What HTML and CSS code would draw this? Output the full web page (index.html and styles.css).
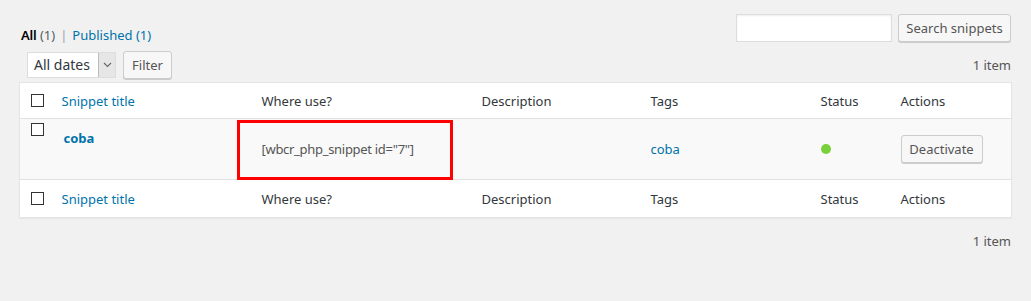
FILE: index.html
```html
<!DOCTYPE html>
<html>
<head>
<meta charset="utf-8">
<link rel="stylesheet" href="styles.css">
</head>
<body>
<div class="wrap">
  <div class="topbar">
    <ul class="views">
      <li><span class="current">All</span> <span class="count">(1)</span></li>
      <li class="sep">|</li>
      <li><a class="link">Published <span class="count-link">(1)</span></a></li>
    </ul>
    <div class="search">
      <div class="search-input"></div>
      <button class="btn btn-search">Search snippets</button>
    </div>
  </div>
  <div class="tablenav">
    <div class="actions">
      <div class="select"><span class="select-text">All dates</span><span class="select-arrow"><svg width="9" height="6" viewBox="0 0 9 6"><path d="M1 1l3.5 3.5L8 1" fill="none" stroke="#666" stroke-width="1.1"/></svg></span></div>
      <button class="btn btn-filter">Filter</button>
    </div>
    <div class="num">1 item</div>
  </div>
  <table class="list">
    <thead>
      <tr>
        <th class="c-check"><span class="cb"></span></th>
        <th class="c-title"><a class="link">Snippet title</a></th>
        <th class="c-where">Where use?</th>
        <th class="c-desc">Description</th>
        <th class="c-tags">Tags</th>
        <th class="c-status">Status</th>
        <th class="c-actions">Actions</th>
      </tr>
    </thead>
    <tbody>
      <tr class="row">
        <td class="c-check top"><span class="cb"></span></td>
        <td class="c-title top"><a class="link strong">coba</a></td>
        <td class="c-where"><span class="code">[wbcr_php_snippet id="7"]</span><span class="highlight"></span></td>
        <td class="c-desc"></td>
        <td class="c-tags"><a class="link">coba</a></td>
        <td class="c-status"><span class="dot"></span></td>
        <td class="c-actions"><button class="btn btn-deact">Deactivate</button></td>
      </tr>
    </tbody>
    <tfoot>
      <tr>
        <th class="c-check"><span class="cb"></span></th>
        <th class="c-title"><a class="link">Snippet title</a></th>
        <th class="c-where">Where use?</th>
        <th class="c-desc">Description</th>
        <th class="c-tags">Tags</th>
        <th class="c-status">Status</th>
        <th class="c-actions">Actions</th>
      </tr>
    </tfoot>
  </table>
  <div class="tablenav-bottom">
    <div class="num">1 item</div>
  </div>
</div>
</body>
</html>
```
FILE: styles.css
```css
* { box-sizing: border-box; }
html, body { margin: 0; padding: 0; }
body {
  background: #f1f1f1;
  font-family: "Noto Sans", "Open Sans", sans-serif;
  font-size: 13px;
  color: #444;
  width: 1031px;
  height: 301px;
  overflow: hidden;
}
.wrap { padding: 14px 20px 0 19px; }

.topbar { display: flex; justify-content: space-between; align-items: flex-start; height: 28px; }
.views { list-style: none; margin: 0; padding: 12px 0 0 2px; display: flex; gap: 4px; line-height: 18px; }
.views li { margin: 0; }
.current { color: #000; font-weight: 600; letter-spacing: -0.2px; }
.count { color: #555d66; }
.count-link { color: #0073aa; }
.sep { color: #a0a5aa; padding: 0 1px; }
.link { color: #0073aa; text-decoration: none; }
.strong { font-weight: 700; font-size: 13px; }

.search { display: flex; gap: 6px; }
.search-input { width: 156px; height: 28px; background: #fff; border: 1px solid #ddd; box-shadow: inset 0 1px 2px rgba(0,0,0,.07); }

.btn {
  font-family: inherit;
  font-size: 13px;
  color: #555;
  background: #f7f7f7;
  border: 1px solid #ccc;
  border-radius: 3px;
  box-shadow: 0 1px 0 #ccc;
  padding: 0 10px;
  height: 28px;
  line-height: 26px;
  margin: 0;
  cursor: pointer;
}
.btn-search { width: 113px; padding: 0; }

.tablenav { display: flex; justify-content: space-between; align-items: center; margin-top: 10px; height: 26px; }
.actions { display: flex; align-items: center; gap: 7px; padding-left: 8px; }
.select { display: flex; width: 89px; height: 26px; background: #fff; border: 1px solid #ddd; }
.select-text { flex: 1; color: #32373c; line-height: 24px; padding-left: 6px; font-size: 14px; }
.select-arrow { width: 17px; background: #e6e6e6; border-left: 1px solid #bbb; display: flex; align-items: center; justify-content: center; }
.btn-filter { width: 49px; padding: 0; }
.num { color: #555; line-height: 18px; }

.list {
  margin-top: 4px;
  width: 992px;
  border-collapse: collapse;
  background: #fff;
  border: 1px solid #e5e5e5;
  box-shadow: 0 1px 1px rgba(0,0,0,.04);
  table-layout: fixed;
}
.list th, .list td { text-align: left; font-weight: 400; padding: 0 10px; color: #32373c; vertical-align: middle; }
.list thead th { height: 36px; border-bottom: 1px solid #e1e1e1; }
.list tfoot th { height: 38px; border-top: 1px solid #e1e1e1; padding-top: 1px; }
.row td { height: 61px; background: #f9f9f9; }
.row td.top { vertical-align: top; padding-top: 10px; }
.c-check { width: 32px; padding: 0 0 0 11px !important; }
.c-title { width: 200px; }
.c-where { width: 220px; position: relative; }
.c-desc { width: 169px; }
.c-tags { width: 170px; }
.c-status { width: 80px; }
.c-actions { width: 121px; }
.cb { display: block; width: 13px; height: 13px; border: 1px solid #333; background: #fff; }
.row .c-check .cb { margin-top: 4px; }
.row .c-title { padding-left: 12px; line-height: 18px; }
.code { color: #555; letter-spacing: -0.3px; }
.highlight {
  position: absolute;
  left: -15px; top: 1px;
  width: 216px; height: 60px;
  border: 3px solid #f00;
}
.dot { display: block; width: 10px; height: 10px; border-radius: 50%; background: #7ad03a; }
.btn-deact { width: 82px; padding: 0; }

.tablenav-bottom { display: flex; justify-content: flex-end; margin-top: 14px; }
```
